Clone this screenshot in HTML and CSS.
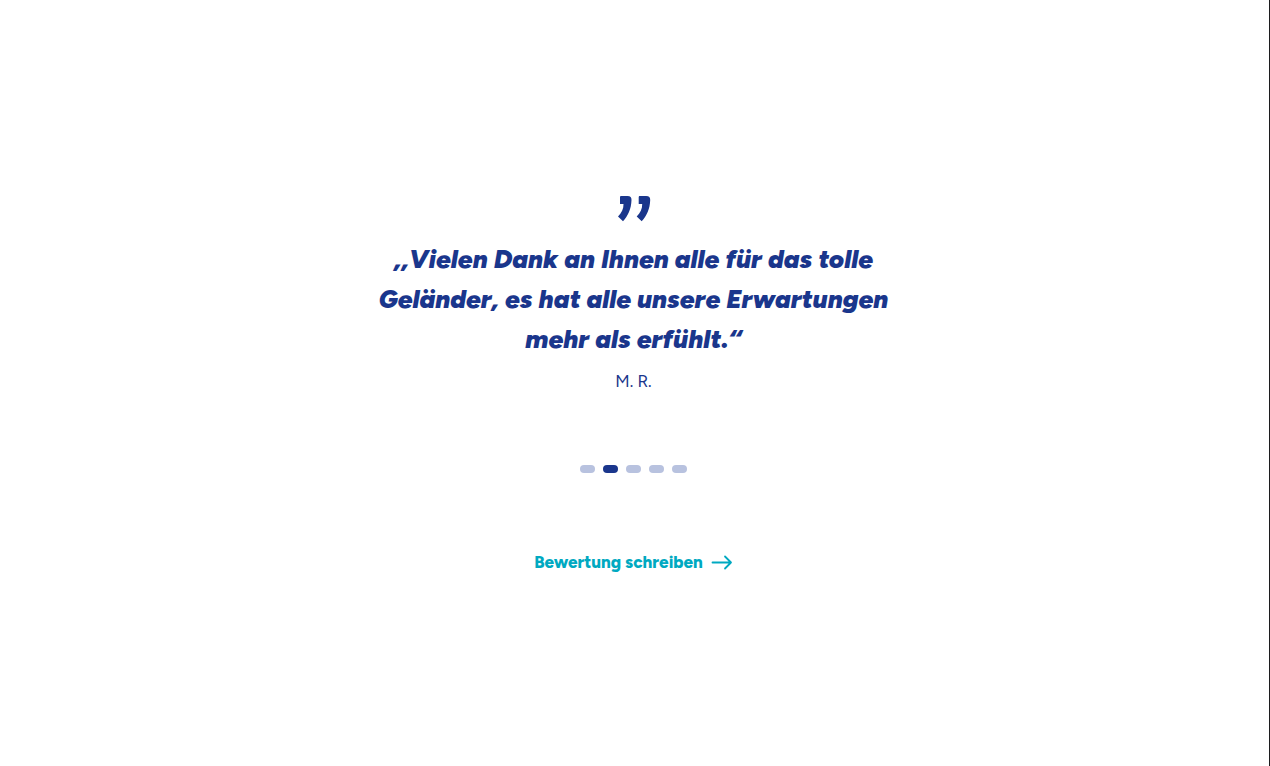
FILE: index.html
```html
<!DOCTYPE html>
<html lang="de">
<head>
<meta charset="utf-8">
<meta name="viewport" content="width=device-width, initial-scale=1">
<title>Bewertungen</title>
<link rel="stylesheet" href="styles.css">
</head>
<body>
<main class="reviews">
  <figure class="review">
    <svg class="quote-mark" viewBox="1 0 34 26" aria-hidden="true">
      <path d="M5 0h6.500c3 0 4 1.200 4 4-.3 9-3.500 16-8.500 21.300L2 20.500c3.500-3.500 5.700-7.500 5.500-12.500H4V1.500C4 .500 4.300 0 5 0z"/>
      <path d="M23.700 0h6.500c3 0 4 1.200 4 4-.3 9-3.500 16-8.500 21.300l-5-4.800c3.500-3.500 5.700-7.500 5.500-12.500h-3.500V1.500c0-1 .3-1.500 1-1.500z"/>
    </svg>
    <blockquote class="quote">,,Vielen Dank an Ihnen alle für das tolle<br>Geländer, es hat alle unsere Erwartungen<br>mehr als erfühlt.“</blockquote>
    <figcaption class="author">M. R.</figcaption>
  </figure>
  <div class="dots">
    <button class="dot" type="button" aria-label="1"></button>
    <button class="dot dot-active" type="button" aria-label="2"></button>
    <button class="dot" type="button" aria-label="3"></button>
    <button class="dot" type="button" aria-label="4"></button>
    <button class="dot" type="button" aria-label="5"></button>
  </div>
  <a class="write-link" href="#">Bewertung schreiben
    <svg class="arrow" viewBox="0 0 22 16" aria-hidden="true"><path d="M1.500 8.500h18.500M14 2.500l6 6-6 6"/></svg>
  </a>
</main>
</body>
</html>
```
FILE: styles.css
```css
* { box-sizing: border-box; }
body { margin: 0; background: #fff; color: #1a368c; font-family: Figtree, Lato, sans-serif; }
.reviews { min-height: 100vh; padding: 196px 2px 0 0; border-right: 1px solid #1c1c1e; display: flex; flex-direction: column; align-items: center; }
.review { margin: 0; display: flex; flex-direction: column; align-items: center; text-align: center; }
.quote-mark { width: 34px; height: 26px; fill: #1a368c; }
.quote { margin: 17px 0 0; font-size: 26px; line-height: 40px; font-weight: 900; font-style: italic; }
.author { margin-top: 10px; font-size: 17px; line-height: 24px; }
.dots { display: flex; gap: 8px; margin-top: 72px; }
.dot { width: 15px; height: 8px; padding: 0; border: 0; border-radius: 4px; background: #b8c2df; }
.dot-active { background: #1a368c; }
.write-link { display: flex; align-items: center; gap: 8px; margin-top: 77px; color: #00a9c1; font-size: 17px; line-height: 24px; font-weight: 800; text-decoration: none; }
.arrow { width: 22px; height: 16px; fill: none; stroke: #00a9c1; stroke-width: 1.800; stroke-linecap: round; stroke-linejoin: round; }
```
